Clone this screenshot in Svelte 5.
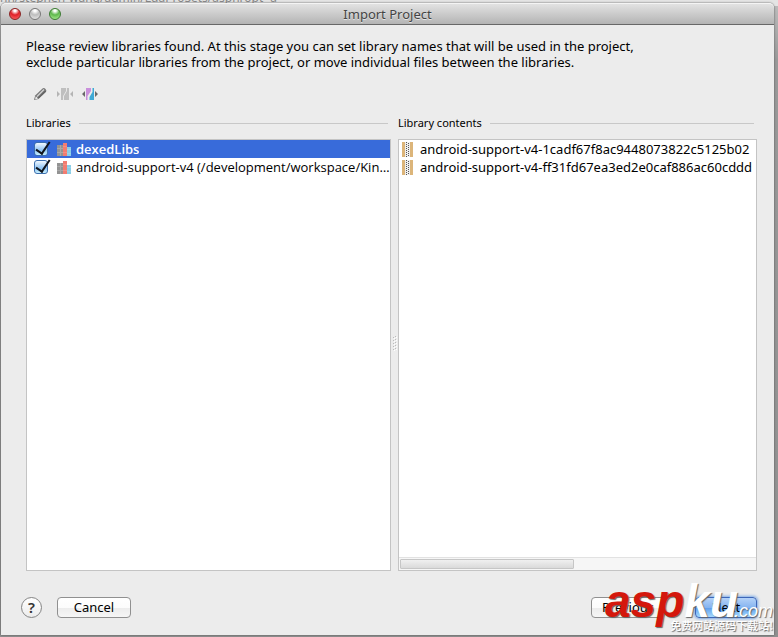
<script>
  let libraries = $state([
    { name: 'dexedLibs', checked: true },
    { name: 'android-support-v4 (/development/workspace/KingRoot/libs)', checked: true }
  ]);

  const files = [
    'android-support-v4-1cadf67f8ac9448073822c5125b02',
    'android-support-v4-ff31fd67ea3ed2e0caf886ac60cddd'
  ];

  let selected = $state(0);
</script>

<div class="desktop">
  <div class="backdrop" aria-hidden="true">nn/stephen-wang/admin/LuaProSets/asphropt -a</div>

  <main class="window">
    <header class="titlebar">
      <div class="lights">
        <button class="light red" aria-label="Close"></button>
        <button class="light gray" aria-label="Minimize"></button>
        <button class="light green" aria-label="Zoom"></button>
      </div>
      <h1>Import Project</h1>
    </header>

    <div class="content">
      <p class="intro">
        Please review libraries found. At this stage you can set library names that will be used in the project,<br />
        exclude particular libraries from the project, or move individual files between the libraries.
      </p>

      <div class="toolbar">
        <button aria-label="Rename">
          <svg width="16" height="16" viewBox="0 0 16 16">
            <path d="M2 14l1.200-4.500L10.500 2.500q1.500-1 3 .5t.5 3L6.500 13z" fill="#777" />
            <path d="M5 10.500l7-7" stroke="#d4d4d4" stroke-width="1.300" />
            <path d="M6.500 12l7-7" stroke="#555" />
            <path d="M3.800 10.300l2.200 2.200-2.800.8z" fill="#f2f2f2" />
          </svg>
        </button>
        <button aria-label="Merge" disabled>
          <svg width="16" height="16" viewBox="0 0 16 16">
            <path d="M4 2h8v12H4z" fill="#bfbfbf" />
            <path d="M9.500 2v3L6.500 10v4" stroke="#e8e8e8" fill="none" />
            <path d="M0 5l3 3-3 3zM16 5l-3 3 3 3z" fill="#b4b4b4" />
          </svg>
        </button>
        <button aria-label="Split">
          <svg width="16" height="16" viewBox="0 0 16 16">
            <path d="M4 2h5v3L5.500 10v4H4z" fill="#c98fdb" />
            <path d="M12 2h-1.500v4L7.500 11v3H12z" fill="#3fa9d6" />
            <path d="M3 5L0 8l3 3zM13 5l3 3-3 3z" fill="#686868" />
          </svg>
        </button>
      </div>

      <div class="panes">
        <section>
          <h2>Libraries</h2>
          <ul class="list">
            {#each libraries as lib, i}
              <li class:selected={selected === i}>
                <input type="checkbox" aria-label={lib.name} bind:checked={lib.checked} />
                <svg width="16" height="16" viewBox="0 0 16 16">
                  <path d="M0 4h6v11H0z" fill="#939393" />
                  <path d="M3.500 4v11M0 7.500h6M0 11.500h6" stroke="#a8a8a8" />
                  <path d="M6 2h4v13H6z" fill="#f27d71" />
                  <path d="M6 5.500h4M6 11.500h4" stroke="#f58f84" />
                  <path d="M10 6h4v9h-4z" fill="#8acde6" />
                  <path d="M10 8.500h4M10 12.500h4" stroke="#9bd5ea" />
                </svg>
                <button class="name" onclick={() => (selected = i)}>{lib.name}</button>
              </li>
            {/each}
          </ul>
        </section>

        <div class="splitter">
          <svg width="6" height="16" viewBox="0 0 6 16">
            {#each [1, 4, 7, 10, 13] as y}
              <path d="M1 {y + 1}h1v1H1zM3 {y}h1v1H3z" fill="#bbb" />
              <path d="M2 {y + 2}h1v1H2zM4 {y + 1}h1v1H4z" fill="#fff" />
            {/each}
          </svg>
        </div>

        <section>
          <h2>Library contents</h2>
          <div class="list files">
            <ul>
              {#each files as file}
                <li>
                  <svg width="12" height="16" viewBox="0 0 12 16">
                    <path d="M0 1h3v15H0zM8 1h3v15H8z" fill="#dcb57a" />
                    <path d="M3 1h5v15H3z" fill="#eee" />
                    <path d="M4.500 1v15" stroke="#555" stroke-dasharray="1 1" />
                    <path d="M6.500 2v14" stroke="#555" stroke-dasharray="1 1" />
                  </svg>
                  <span>{file}</span>
                </li>
              {/each}
            </ul>
            <div class="scrollbar"><div class="thumb"></div></div>
          </div>
        </section>
      </div>

      <footer>
        <button class="help" aria-label="Help">?</button>
        <button class="push">Cancel</button>
        <span class="spacer"></span>
        <button class="push">Previous</button>
        <button class="push primary">Next</button>
      </footer>
    </div>
  </main>

  <div class="watermark">
    <div class="brand"><b>asp</b><b class="ku">ku</b><i>.com</i></div>
    <div class="slogan">免费网站源码下载站!</div>
  </div>
</div>

<style>
  :global(body) {
    margin: 0;
    font-family: "Noto Sans", "Open Sans", "Noto Sans CJK SC", sans-serif;
    font-size: 13px;
    color: #000;
  }
  * {
    box-sizing: border-box;
  }
  button {
    margin: 0;
    padding: 0;
    border: 0;
    background: none;
    font: inherit;
    color: inherit;
  }
  ul {
    margin: 0;
    padding: 0;
    list-style: none;
  }

  .desktop {
    position: relative;
    display: flex;
    min-height: 100vh;
    padding: 3px 4px 2px 1px;
    background: linear-gradient(#e4e4e4 6px, #bbb 6px, #999 60px, #8f8f8f);
    overflow: hidden;
  }
  .backdrop {
    position: absolute;
    top: -9px;
    left: 0;
    line-height: 14px;
    font-size: 12px;
    color: #888;
    white-space: nowrap;
  }
  .window {
    position: relative;
    flex: 1;
    min-width: 0;
    display: flex;
    flex-direction: column;
    border-radius: 5px 5px 0 0;
    background: #ececec;
    box-shadow: 0 0 2px #444;
  }

  .titlebar {
    display: grid;
    grid-template-columns: 1fr auto 1fr;
    align-items: center;
    height: 22px;
    padding: 0 8px;
    border-top: 1px solid #f4f4f4;
    border-bottom: 1px solid #686868;
    border-radius: 5px 5px 0 0;
    background: linear-gradient(#e2e2e2, #b4b4b4);
  }
  .titlebar h1 {
    margin: 0;
    font-size: 13px;
    font-weight: normal;
    line-height: 18px;
    color: #444;
    text-shadow: 0 1px 0 #e4e4e4;
  }
  .lights {
    display: flex;
    gap: 8px;
  }
  .light {
    width: 12px;
    height: 12px;
    border: 1px solid #777;
    border-radius: 50%;
  }
  .red {
    border-color: #8a2222;
    background: radial-gradient(circle at 50% 15%, #fff 0 10%, #e02028 45%, #ff6a6a);
  }
  .gray {
    background: radial-gradient(circle at 50% 15%, #fff 0 10%, #bdbdbd 45%, #eee);
  }
  .green {
    border-color: #3a7a30;
    background: radial-gradient(circle at 50% 15%, #fff 0 10%, #5fb84c 45%, #b5f59c);
  }

  .content {
    flex: 1;
    display: flex;
    flex-direction: column;
    padding: 13px 17px 17px 20px;
  }
  .intro {
    margin: 0 0 16px 5px;
    line-height: 16px;
    white-space: nowrap;
  }
  .toolbar {
    display: flex;
    gap: 9px;
    margin: 0 0 13px 11px;
  }
  .toolbar button {
    width: 16px;
    height: 16px;
  }
  svg {
    display: block;
    flex: none;
  }

  .panes {
    flex: 1;
    display: grid;
    grid-template-columns: 365fr 7px 359fr;
    padding-left: 5px;
  }
  section {
    display: flex;
    flex-direction: column;
    min-width: 0;
  }
  h2 {
    display: flex;
    align-items: center;
    gap: 8px;
    margin: 0 3px 8px 0;
    font-size: 11px;
    font-weight: normal;
    line-height: 16px;
  }
  h2::after {
    content: "";
    flex: 1;
    height: 1px;
    background: #c8c8c8;
  }
  .list {
    flex: 1;
    display: flex;
    flex-direction: column;
    border: 1px solid #c4c4c4;
    background: #fff;
    overflow: hidden;
  }
  .list li {
    display: flex;
    align-items: center;
    height: 18px;
    padding: 0 0 0 7px;
    white-space: nowrap;
  }
  .list input {
    flex: none;
    appearance: none;
    display: grid;
    width: 14px;
    height: 14px;
    margin: 0 9px 0 0;
    border: 1px solid #3c6fae;
    border-radius: 3px;
    background: linear-gradient(#f2f9ff, #8fc3f3 60%, #c8f0ff);
  }
  .list input:checked::after {
    content: "";
    width: 6px;
    height: 13px;
    margin: -4px 0 0 4px;
    border: solid #10141c;
    border-width: 0 2px 2px 0;
    transform: rotate(34deg);
  }
  .list .name {
    margin-left: 3px;
    overflow: hidden;
    text-overflow: ellipsis;
    text-align: left;
    font-family: "Open Sans", sans-serif;
    line-height: 18px;
  }
  .list .selected {
    background: #386bda;
    color: #fff;
  }
  .selected .name {
    font-weight: 600;
  }
  .files ul {
    flex: 1;
  }
  .files li {
    gap: 6px;
    padding: 0 0 0 3px;
  }
  .scrollbar {
    height: 13px;
    padding: 1px;
    border-top: 1px solid #e2e2e2;
    background: #f6f6f6;
  }
  .thumb {
    width: 49%;
    height: 10px;
    border: 1px solid #c6c6c6;
    border-radius: 1px;
    background: linear-gradient(#f0f0f0, #dadada);
  }
  .splitter {
    display: grid;
    place-items: center;
  }

  footer {
    display: flex;
    align-items: center;
    margin-top: 26px;
  }
  .help {
    width: 21px;
    height: 21px;
    margin-right: 15px;
    border: 1px solid #858585;
    border-radius: 50%;
    background: linear-gradient(#fff, #ececec);
    font-size: 15px;
    font-weight: 600;
    line-height: 19px;
    color: #333;
  }
  .push {
    width: 74px;
    height: 21px;
    padding-bottom: 2px;
    border: 1px solid #909090;
    border-radius: 4px;
    background: linear-gradient(#fff, #fcfcfc 50%, #ececec 51%, #f6f6f6);
    line-height: 16px;
  }
  .spacer {
    flex: 1;
  }
  .primary {
    width: 62px;
    margin-left: 30px;
    border-color: #3d66b8;
    background: linear-gradient(#b4d2f8, #86b4f0 50%, #5c9bec 51%, #a5dbff);
    box-shadow: 0 0 3px 1px #7aa9e6;
  }

  .watermark {
    position: absolute;
    right: 5px;
    bottom: 5px;
    pointer-events: none;
    font-family: "Liberation Sans", "Noto Sans CJK SC", sans-serif;
    color: #fff;
    text-shadow: 1px 1px 1px #666;
  }
  .brand {
    display: flex;
    justify-content: flex-end;
    align-items: baseline;
    height: 38px;
    line-height: 42px;
    font-size: 46px;
    font-style: italic;
  }
  .brand b {
    color: #d4170c;
  }
  .brand .ku {
    margin-right: -4px;
    color: #fff;
  }
  .brand i {
    font-size: 18px;
  }
  .slogan {
    font-family: "Noto Sans CJK SC", sans-serif;
    font-size: 11px;
    font-weight: 500;
    line-height: 14px;
    text-align: right;
  }
</style>
